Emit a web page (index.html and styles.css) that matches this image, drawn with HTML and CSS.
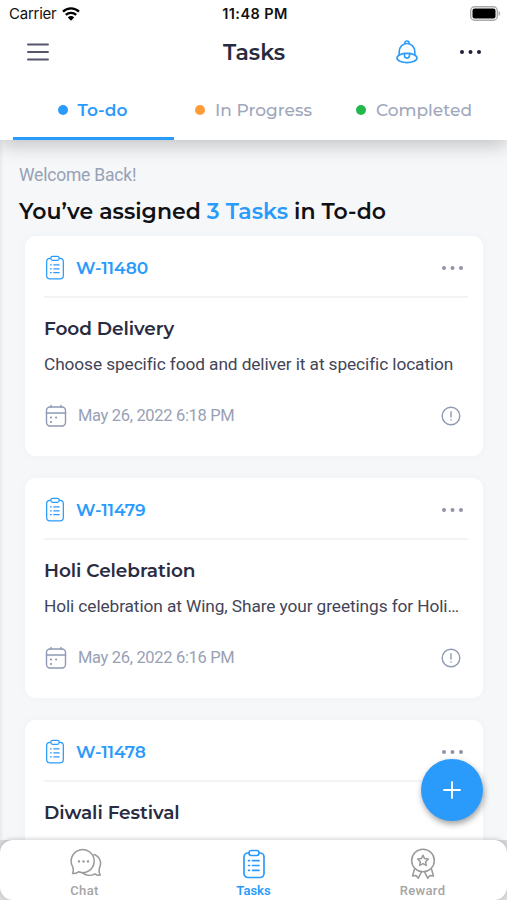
FILE: index.html
```html
<!DOCTYPE html>
<html lang="en">
<head>
<meta charset="utf-8">
<title>Tasks</title>
<link rel="stylesheet" href="styles.css">
</head>
<body>
<svg class="sprite" aria-hidden="true">
  <symbol id="clipboard" viewBox="0 0 24 30">
    <rect x="2" y="4" width="20" height="24.5" rx="4"/>
    <rect x="7" y="1.5" width="10" height="5" rx="2.2" class="fill-white"/>
    <path d="M6.500 11.700h1M10.500 11.700H17M6.500 16.500h1M10.500 16.500H17M6.500 21.300h1M10.500 21.300H17"/>
  </symbol>
  <symbol id="calendar" viewBox="0 0 22 24">
    <rect x="1.500" y="3" width="19" height="19" rx="3.500"/>
    <path d="M1.500 9h19M6 1.500V3M16 1.500V3"/>
    <path d="M5.900 13.500h.2M11 13.500h.2M5.900 18h.2" stroke-width="2"/>
  </symbol>
  <symbol id="alert" viewBox="0 0 20 20">
    <circle cx="10" cy="10" r="8.800"/>
    <path d="M10 5.800v5.200M10 13.800v.3"/>
  </symbol>
  <symbol id="dots" viewBox="0 0 24 6">
    <circle cx="3" cy="3" r="2"/><circle cx="11.500" cy="3" r="2"/><circle cx="20" cy="3" r="2"/>
  </symbol>
</svg>
<div class="screen">
  <header class="top">
    <div class="status">
      <div class="carrier"><span>Carrier</span>
        <svg width="18" height="14" viewBox="0 0 18 14"><path d="M1 4.700a11.500 11.500 0 0 1 16 0M3.800 7.900a7.500 7.500 0 0 1 10.400 0" fill="none" stroke="#000" stroke-width="2.300"/><path d="M9 13.700 5.800 10.400a4.500 4.500 0 0 1 6.400 0z"/></svg>
      </div>
      <span class="clock">11:48 PM</span>
      <svg class="battery" width="31" height="15" viewBox="0 0 31 15"><rect x=".7" y=".7" width="26.600" height="13.600" rx="4" fill="#fff" stroke="#aaa" stroke-width="1.400"/><rect x="2.500" y="2.500" width="23" height="10" rx="2"/><path d="M28.600 5c2 .7 2 4.300 0 5z" fill="#aaa"/></svg>
    </div>
    <div class="nav">
      <svg class="menu" width="22" height="18" viewBox="0 0 22 18"><path d="M1 1.500h20M1 9h20M1 16.500h20"/></svg>
      <h1>Tasks</h1>
      <div class="actions">
        <svg class="bell" width="22" height="24" viewBox="0 0 22 24"><path d="M3.200 15V11.500a7.800 8 0 0 1 15.600 0V15"/><path d="M8.900 3.600V2.700a2.100 1.700 0 0 1 4.200 0v.9"/><ellipse cx="11" cy="18" rx="10" ry="4.600"/><path d="M8.500 13.600v2a2.500 2.500 0 0 0 5 0v-2"/></svg>
        <svg class="more" width="24" height="6"><use href="#dots"/></svg>
      </div>
    </div>
    <nav class="tabs">
      <span class="tab todo active"><i></i><b>To-do</b></span>
      <span class="tab progress"><i></i><b>In Progress</b></span>
      <span class="tab done"><i></i><b>Completed</b></span>
    </nav>
  </header>
  <main>
    <p class="welcome">Welcome Back!</p>
    <h2>You’ve assigned <em>3 Tasks</em> in To-do</h2>
    <section class="cards">
      <article class="card">
        <div class="card-head"><svg class="clip" width="20" height="25"><use href="#clipboard"/></svg><span>W-11480</span><svg class="more" width="24" height="6"><use href="#dots"/></svg></div>
        <h3>Food Delivery</h3>
        <p class="desc">Choose specific food and deliver it at specific location</p>
        <div class="meta"><svg width="22" height="24"><use href="#calendar"/></svg><time>May 26, 2022 6:18 PM</time><svg class="alert" width="20" height="20"><use href="#alert"/></svg></div>
      </article>
      <article class="card">
        <div class="card-head"><svg class="clip" width="20" height="25"><use href="#clipboard"/></svg><span>W-11479</span><svg class="more" width="24" height="6"><use href="#dots"/></svg></div>
        <h3>Holi Celebration</h3>
        <p class="desc">Holi celebration at Wing, Share your greetings for Holi…</p>
        <div class="meta"><svg width="22" height="24"><use href="#calendar"/></svg><time>May 26, 2022 6:16 PM</time><svg class="alert" width="20" height="20"><use href="#alert"/></svg></div>
      </article>
      <article class="card">
        <div class="card-head"><svg class="clip" width="20" height="25"><use href="#clipboard"/></svg><span>W-11478</span><svg class="more" width="24" height="6"><use href="#dots"/></svg></div>
        <h3>Diwali Festival</h3>
      </article>
    </section>
  </main>
  <footer>
    <div class="bar">
      <a class="item"><svg width="32" height="30" viewBox="0 0 32 30"><path d="M2.500 24.500C3.700 22.300 3.500 20.500 2.800 18A11.500 11.500 0 1 1 8.500 22.800C6.500 24.200 4.500 24.700 2.500 24.500z"/><path d="M24 5.500c6 2 8 8 5.500 13.500-.7 2.500-.6 5 .8 7-2.500.5-4-.2-5.300-1.200-4.500 2.500-9.500 1.500-12.500-1"/><path d="M8.900 12.500h.2M13.400 12.500h.2M17.900 12.500h.2" stroke-width="2.300"/></svg><span>Chat</span></a>
      <a class="item on"><svg width="24" height="30"><use href="#clipboard"/></svg><span>Tasks</span></a>
      <a class="item"><svg width="26" height="32" viewBox="0 0 26 32"><circle cx="13" cy="12.500" r="11.300"/><path d="m13 7.200 1.600 3.400 3.700.5-2.700 2.600.7 3.700-3.300-1.800-3.300 1.800.7-3.700-2.700-2.600 3.700-.5zM4.500 21 2.500 28l3.500-.6 2.300 2.800 3-6M21.500 21l2 7-3.500-.6-2.300 2.800-3-6"/></svg><span>Reward</span></a>
    </div>
  </footer>
  <button class="fab" aria-label="Add task"><svg width="18" height="18" viewBox="0 0 18 18"><path d="M9 1v16M1 9h16"/></svg></button>
</div>
</body>
</html>
```
FILE: styles.css
```css
* { box-sizing: border-box; }
body, h1, h2, h3, p { margin: 0; }
svg { fill: none; stroke-linecap: round; stroke-linejoin: round; flex: none; display: block; }
.sprite { position: absolute; width: 0; height: 0; }
.fill-white { fill: #fff; }
.screen {
  position: relative;
  width: 507px;
  height: 900px;
  overflow: hidden;
  display: flex;
  flex-direction: column;
  background: #f5f7f9;
  font-family: Montserrat, Inter, sans-serif;
  box-shadow: inset 2px 0 2px #e9ebee;
}
.top {
  height: 140px;
  flex: none;
  background: #fff;
  position: relative;
  z-index: 1;
  box-shadow: 0 5px 18px rgba(0, 0, 0, .22);
}
.status {
  height: 28px;
  display: grid;
  grid-template-columns: 1fr auto 1fr;
  align-items: center;
  padding: 0 6px 1px 9px;
  font: 15px/26px Inter, sans-serif;
  color: #111;
}
.carrier { display: flex; align-items: center; gap: 6px; letter-spacing: -.25px; }
.carrier svg, .battery { fill: #000; stroke-linecap: butt; }
.clock { font-weight: 600; font-size: 14.5px; letter-spacing: .4px; }
.battery { justify-self: end; }
.nav {
  height: 49px;
  display: grid;
  grid-template-columns: 1fr auto 1fr;
  align-items: center;
  padding: 0 25px 1px 26px;
}
.menu { stroke: #55566c; stroke-width: 1.9; margin-left: 1px; }
h1 { font-size: 22px; line-height: 28px; font-weight: 600; color: #282a40; padding-top: 1px; }
.actions { display: flex; justify-content: flex-end; align-items: center; gap: 41px; margin-right: -1px; }
.bell { stroke: #2b9bfb; stroke-width: 1.6; }
.actions .more { fill: #20223a; }
.tabs { display: grid; grid-template-columns: repeat(3, 161px); padding-left: 13px; height: 63px; }
.tab {
  display: flex;
  align-items: center;
  justify-content: center;
  gap: 10px;
  padding: 5px 2px 0 0;
  border-bottom: 3px solid transparent;
  color: #9ea7bb;
  font-size: 17px;
}
.tab i { width: 10px; height: 10px; border-radius: 50%; background: currentColor; }
.tab b { font-weight: 500; }
.active { color: #2b9bfb; border-color: #2b9bfb; }
.active b { font-weight: 600; }
.progress i { background: #ff9c38; }
.done i { background: #22b84b; }
.done { padding-right: 3px; }
main { flex: 1; min-height: 0; overflow: hidden; padding: 24px 24px 0 19px; }
.welcome { font: 17.5px/22px Roboto, sans-serif; letter-spacing: -.2px; color: #98a1b5; }
h2 { font-size: 22px; line-height: 30px; margin-top: 11px; font-weight: 600; color: #101114; white-space: nowrap; }
em { font-style: normal; color: #2b9bfb; }
.cards { display: flex; flex-direction: column; gap: 22px; margin: 9px 0 0 6px; }
.card {
  height: 220px;
  flex: none;
  padding: 0 15px 0 19px;
  background: #fff;
  border-radius: 11px;
  box-shadow: 0 0 9px rgba(90, 110, 140, .035);
}
.card-head {
  height: 62px;
  display: flex;
  align-items: center;
  padding-top: 3px;
  border-bottom: 2px solid #f2f3f5;
  color: #2b9bfb;
  font-size: 17px;
  font-weight: 600;
}
.card-head span { margin-left: 11px; letter-spacing: -.05px; }
.clip { stroke: currentColor; stroke-width: 1.5; margin-left: 1px; }
.card .more { fill: #9292a8; margin: 0 3px 0 auto; }
h3 { font-size: 18.5px; line-height: 24px; font-weight: 600; margin-top: 19px; letter-spacing: -.08px; color: #292b41; }
.desc { font: 17.3px/24px Roboto, sans-serif; letter-spacing: -.1px; margin-top: 11px; color: #434557; white-space: nowrap; }
.meta {
  display: flex;
  align-items: center;
  height: 24px;
  margin-top: 28px;
  padding: 0 7px 0 1px;
  color: #98a1b5;
  font: 16.5px/24px Roboto, sans-serif;
  letter-spacing: -.33px;
}
.meta svg { stroke: #8f99b3; stroke-width: 1.4; }
.meta time { margin-left: 11px; }
.meta .alert { margin-left: auto; }
footer { height: 60px; flex: none; background: #d9dadd; position: relative; }
.bar {
  height: 60px;
  display: grid;
  grid-template-columns: repeat(3, 1fr);
  background: #fff;
  border-radius: 13px;
  box-shadow: 0 -1px 4px rgba(0, 0, 0, .18);
}
.item {
  display: flex;
  flex-direction: column;
  align-items: center;
  justify-content: space-between;
  padding: 8px 0 1px;
  color: #a5a5a5;
  font: 500 13px/16px Roboto, sans-serif;
  letter-spacing: .35px;
}
.item svg { stroke: #999; stroke-width: 1.5; height: 32px; }
.item:first-child svg { margin-left: 2px; }
.item.on { color: #2b9bfb; font-weight: 600; letter-spacing: 0; }
.item.on svg { stroke: #2b9bfb; stroke-width: 1.7; }
.fab {
  position: absolute;
  left: 421px;
  top: 759px;
  width: 62px;
  height: 62px;
  display: grid;
  place-items: center;
  border: 0;
  border-radius: 50%;
  background: #2b9bfb;
  box-shadow: 1px 3px 6px rgba(0, 0, 0, .38);
}
.fab svg { stroke: #fff; stroke-width: 1.8; }
```
